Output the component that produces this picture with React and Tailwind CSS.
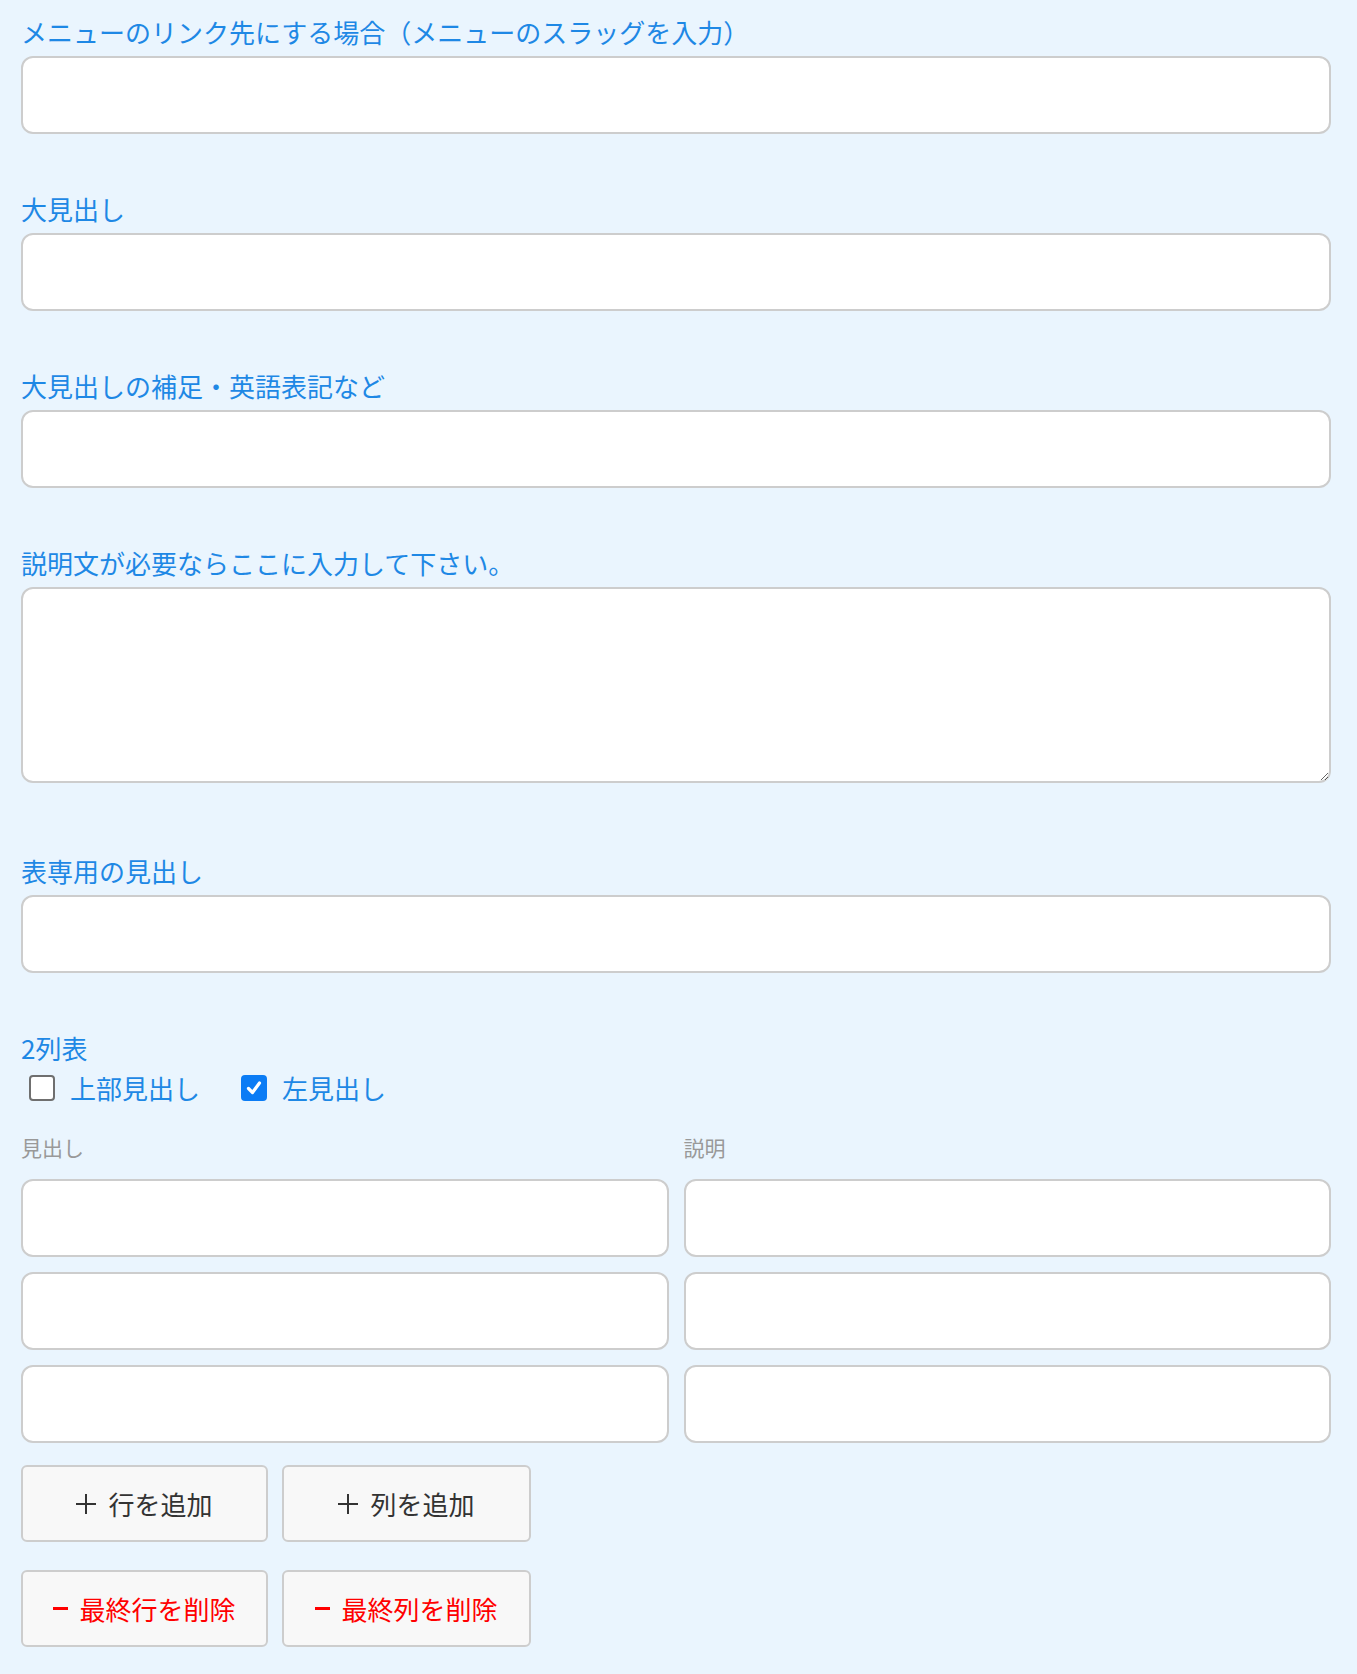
import React from "react";

const font = { fontFamily: '"Noto Sans CJK JP", "Noto Sans", sans-serif' };

function Label({ children }) {
  return (
    <div className="text-[26px] leading-[34px] text-[#1e88e5] mb-[7px]">{children}</div>
  );
}

function Input({ className = "" }) {
  return (
    <input
      type="text"
      className={
        "block w-full h-[78px] bg-white border-2 border-[#cdcdcd] rounded-[12px] outline-none px-4 " +
        className
      }
    />
  );
}

function Field({ label }) {
  return (
    <div className="mb-[58px]">
      <Label>{label}</Label>
      <Input />
    </div>
  );
}

function Checkbox({ checked, label }) {
  return (
    <label className="flex items-center gap-[15px]">
      {checked ? (
        <span className="w-[26px] h-[26px] rounded-[4px] bg-[#0b7cf5] flex items-center justify-center">
          <svg width="18" height="18" viewBox="0 0 18 18">
            <path d="M3.5 9.5 L7.5 13.5 L14.5 4" fill="none" stroke="white" strokeWidth="3.2" strokeLinecap="round" strokeLinejoin="round" />
          </svg>
        </span>
      ) : (
        <span className="w-[26px] h-[26px] rounded-[4px] border-2 border-[#6f6f6f] bg-white" />
      )}
      <span className="text-[26px] leading-[34px] text-[#1e88e5]">{label}</span>
    </label>
  );
}

function Button({ children, red }) {
  return (
    <button
      className={
        "w-full h-[77px] bg-[#f8f8f8] border-2 border-[#cdcdcd] rounded-[6px] text-[26px] flex items-center justify-center " +
        (red ? "text-[#ff0000]" : "text-[#333333]")
      }
    >
      {children}
    </button>
  );
}

function Plus() {
  return (
    <span className="relative w-[20px] h-[20px] mr-[12px]">
      <span className="absolute left-0 top-[9px] w-[20px] h-[2px] bg-[#333333]" />
      <span className="absolute left-[9px] top-0 w-[2px] h-[20px] bg-[#333333]" />
    </span>
  );
}

function Minus() {
  return <span className="w-[15px] h-[3px] bg-[#ff0000] mr-[11px]" />;
}

export default function App() {
  return (
    <div style={font} className="bg-[#eaf5fe] min-h-[1674px] pl-[21px] pr-[26px] pt-[15px] pb-[26px]">
      <Field label="メニューのリンク先にする場合（メニューのスラッグを入力）" />
      <Field label="大見出し" />
      <Field label="大見出しの補足・英語表記など" />
      <div className="mb-[71px]">
        <Label>説明文が必要ならここに入力して下さい。</Label>
        <textarea className="block w-full h-[196px] bg-white border-2 border-[#cdcdcd] rounded-[12px] outline-none p-4" />
      </div>
      <Field label="表専用の見出し" />
      <div>
        <div className="text-[26px] leading-[34px] text-[#1e88e5]">2列表</div>
        <div className="flex items-center gap-[41px] mt-[6px] pl-[8px] h-[34px]">
          <Checkbox checked={false} label="上部見出し" />
          <Checkbox checked={true} label="左見出し" />
        </div>
        <div className="grid grid-cols-2 gap-x-[15px] mt-[28px]">
          <div className="text-[21px] leading-[28px] text-[#999999]">見出し</div>
          <div className="text-[21px] leading-[28px] text-[#999999]">説明</div>
        </div>
        <div className="grid grid-cols-2 gap-x-[15px] gap-y-[15px] mt-[18px]">
          <Input />
          <Input />
          <Input />
          <Input />
          <Input />
          <Input />
        </div>
        <div className="flex gap-[14px] mt-[22px]">
          <div className="w-[247px]"><Button><Plus /><span>行を追加</span></Button></div>
          <div className="w-[249px]"><Button><Plus /><span>列を追加</span></Button></div>
        </div>
        <div className="flex gap-[14px] mt-[28px]">
          <div className="w-[247px]"><Button red><Minus /><span>最終行を削除</span></Button></div>
          <div className="w-[249px]"><Button red><Minus /><span>最終列を削除</span></Button></div>
        </div>
      </div>
    </div>
  );
}
